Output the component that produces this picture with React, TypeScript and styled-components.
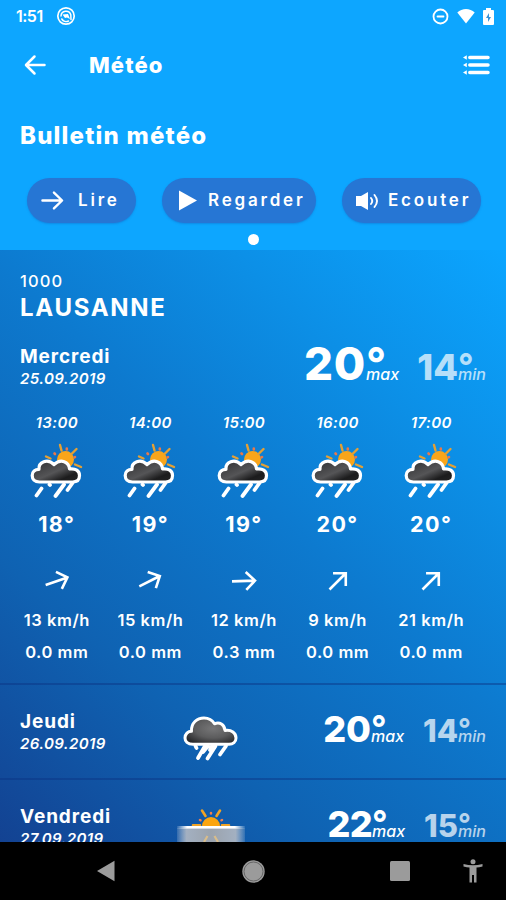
import React from 'react';
import styled, { createGlobalStyle } from 'styled-components';

const GlobalStyle = createGlobalStyle`
  *, *::before, *::after { box-sizing: border-box; }
  html, body { margin: 0; padding: 0; background: #000; }
  body { overflow: hidden; }
`;

const Screen = styled.div`
  width: 506px;
  height: 900px;
  display: flex;
  flex-direction: column;
  overflow: hidden;
  color: #fff;
  background: #0da6ff;
  font-family: Inter, 'Open Sans', sans-serif;
  white-space: nowrap;
  svg { display: block; flex: none; }
`;

const StatusBar = styled.header`
  height: 32px;
  flex: none;
  display: flex;
  align-items: center;
  padding: 0 12px 0 16px;
`;

const Clock = styled.span`
  width: 40px;
  font-size: 16px;
  line-height: 32px;
  font-weight: 600;
  letter-spacing: -0.5px;
`;

const StatusIcons = styled.div`
  margin-left: auto;
  display: flex;
  align-items: center;
  gap: 8px;
`;

const AppBar = styled.div`
  height: 66px;
  flex: none;
  display: flex;
  align-items: center;
  padding: 0 16px 0 24px;
`;

const AppTitle = styled.h1`
  margin: 0 auto 0 43px;
  font-size: 22px;
  line-height: 30px;
  font-weight: 800;
  letter-spacing: 1.1px;
`;

const Bulletin = styled.section`
  height: 152px;
  flex: none;
  display: flex;
  flex-direction: column;
  padding: 22px 25px 0 20px;
`;

const BulletinTitle = styled.h2`
  margin: 0;
  font-size: 24px;
  line-height: 32px;
  font-weight: 800;
  letter-spacing: 1.2px;
`;

const Actions = styled.div`
  margin: 26px 0 0 7px;
  display: flex;
  justify-content: space-between;
`;

const Pill = styled.button<{ $width: number; $left: number; $gap: number }>`
  width: ${(p) => p.$width}px;
  height: 45px;
  border: 0;
  border-radius: 23px;
  padding: 0 0 0 ${(p) => p.$left}px;
  display: flex;
  align-items: center;
  gap: ${(p) => p.$gap}px;
  background: #2676d4;
  box-shadow: 0 1px 2px rgba(20, 90, 180, 0.35);
  color: #fff;
  font: 600 17px/45px Inter, sans-serif;
  letter-spacing: 2.8px;
`;

const PagerDot = styled.span`
  width: 11px;
  height: 11px;
  margin: 11px 0 0 228px;
  border-radius: 50%;
  background: #fff;
`;

const Forecast = styled.main`
  height: 592px;
  flex: none;
  overflow: hidden;
  background: linear-gradient(42deg, #134292 0%, #0f62b2 27%, #0d7acf 55%, #0c8fe6 76%, #0ba5ff 100%);
`;

const Today = styled.section`
  height: 433px;
  padding-top: 19px;
`;

const Place = styled.div`
  padding-left: 20px;
  height: 78px;
`;

const PostCode = styled.div`
  font-size: 16.5px;
  line-height: 24px;
  font-weight: 500;
  letter-spacing: 1.1px;
`;

const City = styled.div`
  font-size: 24px;
  line-height: 30px;
  font-weight: 700;
  letter-spacing: 1.7px;
`;

const DaySummary = styled.div`
  height: 48px;
  display: flex;
  align-items: flex-start;
  padding: 0 19px 0 20px;
`;

const DayLabel = styled.div<{ $raise?: number }>`
  width: 164px;
  margin-top: -${(p) => p.$raise ?? 0}px;
`;

const DayName = styled.div`
  font-size: 19px;
  line-height: 23px;
  font-weight: 700;
  letter-spacing: 0.9px;
`;

const DayDate = styled.div`
  font-size: 15px;
  line-height: 22px;
  font-weight: 600;
  font-style: italic;
  letter-spacing: 0.4px;
`;

const Temps = styled.div<{ $top?: number }>`
  margin-left: auto;
  margin-top: ${(p) => p.$top ?? 0}px;
  display: flex;
  align-items: flex-end;
`;

const Temp = styled.div<{ $faded?: boolean; $width: number }>`
  width: ${(p) => p.$width}px;
  display: flex;
  align-items: flex-end;
  justify-content: flex-end;
  opacity: ${(p) => (p.$faded ? 0.7 : 1)};
`;

const TempValue = styled.span<{ $size: number; $spacing: number }>`
  font-size: ${(p) => p.$size}px;
  line-height: ${(p) => Math.round(p.$size * 0.73)}px;
  font-weight: 800;
  letter-spacing: ${(p) => p.$spacing}px;
`;

const TempUnit = styled.span<{ $height: number; $width: number }>`
  width: ${(p) => p.$width}px;
  height: ${(p) => p.$height}px;
  display: flex;
  flex-direction: column;
  justify-content: space-between;
`;

const Degree = styled.span<{ $size: number }>`
  font-size: ${(p) => p.$size}px;
  height: ${(p) => p.$size * 0.36}px;
  line-height: ${(p) => p.$size * 0.73}px;
  font-weight: 700;
`;

const Bound = styled.span`
  font-size: 16px;
  line-height: 12px;
  font-weight: 500;
  font-style: italic;
`;

const Hours = styled.div`
  display: grid;
  grid-template-columns: repeat(5, 93.6px);
  padding-left: 10px;
`;

const Hour = styled.div`
  display: flex;
  flex-direction: column;
  align-items: center;
`;

const HourTime = styled.div`
  font-size: 15px;
  line-height: 20px;
  font-weight: 600;
  font-style: italic;
  margin: 18px 0 9px;
  letter-spacing: 0.4px;
`;

const HourTemp = styled.div`
  font-size: 21.5px;
  line-height: 28px;
  font-weight: 700;
  margin: 12px 0 31px;
  letter-spacing: 1.4px;
`;

const HourData = styled.div`
  font-size: 16.5px;
  line-height: 32px;
  font-weight: 600;
  letter-spacing: 0.55px;
`;

const WindBox = styled.div`
  height: 24px;
  margin-bottom: 11px;
`;

const DayRow = styled.section`
  height: 95px;
  border-top: 2px solid rgba(10, 50, 130, 0.45);
  display: flex;
  align-items: flex-start;
  padding: 25px 19px 0 20px;
`;

const DayIcon = styled.div<{ $top: number }>`
  width: 70px;
  margin: ${(p) => p.$top}px 0 0 -8px;
  display: flex;
  justify-content: center;
`;

const NavBar = styled.nav`
  height: 58px;
  flex: none;
  background: #000;
  display: flex;
  align-items: center;
  padding-left: 96px;
`;

const NavItem = styled.div<{ $gap: number }>`
  margin-right: ${(p) => p.$gap}px;
`;

const stroke = { fill: 'none', stroke: '#fff', strokeLinecap: 'round', strokeLinejoin: 'round' } as const;

const ArrowIcon = () => (
  <svg width="23" height="23" viewBox="0 0 24 24">
    <path d="M1.500 12H21.500M13.500 3.800L22 12l-8.500 8.200" {...stroke} strokeWidth="2.500" />
  </svg>
);

const WindIcon = ({ angle }: { angle: number }) => (
  <svg width="26" height="24" viewBox="0 0 26 24">
    <g transform={`rotate(${angle} 13 12)`} fill="none" stroke="#fff" strokeWidth="2.600">
      <path d="M1 12H24M15 3L24 12l-9 9" />
    </g>
  </svg>
);

const ShowerIcon = () => (
  <svg width="54" height="56" viewBox="0 0 54 56">
    <defs>
      <linearGradient id="darkCloud" x1="0" y1="0" x2="1" y2="1">
        <stop offset="0" stopColor="#2d2d2f" />
        <stop offset="0.5" stopColor="#555557" />
        <stop offset="0.75" stopColor="#1c1c1d" />
        <stop offset="1" stopColor="#242425" />
      </linearGradient>
    </defs>
    <circle cx="35.500" cy="17.500" r="8.500" fill="#f9a51a" />
    <g stroke="#e3a035" strokeWidth="2.400" strokeLinecap="round">
      <path d="M30 3L31.500 8.500M46.500 7L41.500 12M45 22.500L51 25M16 14.500L20.500 16.500" />
    </g>
    <g stroke="#e8784a" strokeWidth="2.600" strokeLinecap="round">
      <path d="M36.800 6.500v1M45 15l-.5.300M24.500 11.500l.5.500" />
    </g>
    <g stroke="#fff" strokeWidth="3.800" strokeLinecap="round">
      <path d="M11.500 46.500l-5 7M19.500 42.500l.5.500M34 42.500L25.500 54M42.500 41L37.500 48" />
    </g>
    <path
      d="M9.500 40C4.500 40 2.200 37 2.200 33.500C2.200 29.500 5 27.300 9 27.300C8.300 20 17.500 16 24 22.500C31 16 39 20 39.500 27C45.500 26 49.500 29 49.500 33.500C49.500 37.500 47 40 42.500 40Z"
      fill="url(#darkCloud)" stroke="#fff" strokeWidth="3.200" strokeLinejoin="round"
    />
  </svg>
);

const RainIcon = () => (
  <svg width="56" height="48" viewBox="0 0 56 48">
    <defs>
      <radialGradient id="rainCloud" cx="0.55" cy="0.4" r="0.65">
        <stop offset="0" stopColor="#767677" />
        <stop offset="0.55" stopColor="#5c5c5d" />
        <stop offset="1" stopColor="#29292b" />
      </radialGradient>
    </defs>
    <g stroke="#fff" strokeWidth="3.800" strokeLinecap="round">
      <path d="M12.500 30l1 2M22 30L15 42M25 30l-5 6M32.500 30L24.500 42.500M43 30L37 38.500M29 30l-2 4" />
    </g>
    <path
      d="M10 28.300C4.500 28.300 2 25.500 2 22C2 18 5 15.300 8.500 15.300C8 7 14 2 21 2C26.500 2 29.500 4.500 31.500 7.800C36.500 5.500 41.500 8.500 42 14.500C48.500 13.500 53 17 53 22C53 26 50 28.300 46 28.300Z"
      fill="url(#rainCloud)" stroke="#fff" strokeWidth="3" strokeLinejoin="round"
    />
  </svg>
);

const FogSunIcon = () => (
  <svg width="70" height="40" viewBox="0 0 70 40">
    <defs>
      <linearGradient id="fog" x1="0" y1="0" x2="1" y2="0">
        <stop offset="0" stopColor="#b8c4d4" stopOpacity="0.2" />
        <stop offset="0.14" stopColor="#a3b0c1" />
        <stop offset="0.5" stopColor="#9ba3ad" />
        <stop offset="0.86" stopColor="#a3b0c1" />
        <stop offset="1" stopColor="#b8c4d4" stopOpacity="0.2" />
      </linearGradient>
      <linearGradient id="fogEdge" x1="0" y1="0" x2="1" y2="0">
        <stop offset="0" stopColor="#fff" stopOpacity="0.1" />
        <stop offset="0.15" stopColor="#fff" />
        <stop offset="0.85" stopColor="#fff" />
        <stop offset="1" stopColor="#fff" stopOpacity="0.1" />
      </linearGradient>
    </defs>
    <path d="M26 18a9 9 0 0 1 18 0Z" fill="#fba50f" />
    <g stroke="#f0a325" strokeWidth="2.600" strokeLinecap="round">
      <path d="M29.500 8L26 2.500M40.500 8L44 2.500M17 17.300H24M46 17.300H53" />
    </g>
    <g stroke="#ef8050" strokeWidth="2.500" strokeLinecap="round">
      <path d="M35 5V5.500M24 12l.5.300M46 12l-.5.300" />
    </g>
    <rect x="1" y="20" width="68" height="20" fill="url(#fog)" />
    <rect x="1" y="18" width="68" height="2.600" fill="url(#fogEdge)" />
    <path d="M31.500 28L28 34M38.500 28l3.500 6" stroke="#d9bd8b" strokeWidth="2.200" />
  </svg>
);

type TempProps = { value: string; size: number; faded?: boolean; width: number; spacing?: number; unitWidth: number; degree: number };

const Temperature = ({ value, size, faded, width, spacing = 0, unitWidth, degree }: TempProps) => (
  <Temp $faded={faded} $width={width}>
    <TempValue $size={size} $spacing={spacing}>{value}</TempValue>
    <TempUnit $height={Math.round(size * 0.73)} $width={unitWidth}>
      <Degree $size={degree}>°</Degree>
      <Bound>{faded ? 'min' : 'max'}</Bound>
    </TempUnit>
  </Temp>
);

const hours = [
  { time: '13:00', temp: '18°', angle: -19, wind: '13 km/h', rain: '0.0 mm' },
  { time: '14:00', temp: '19°', angle: -27, wind: '15 km/h', rain: '0.0 mm' },
  { time: '15:00', temp: '19°', angle: -2, wind: '12 km/h', rain: '0.3 mm' },
  { time: '16:00', temp: '20°', angle: -45, wind: '9 km/h', rain: '0.0 mm' },
  { time: '17:00', temp: '20°', angle: -45, wind: '21 km/h', rain: '0.0 mm' },
];

export default function App() {
  return (
    <>
      <GlobalStyle />
      <Screen>
        <StatusBar>
          <Clock>1:51</Clock>
          <svg width="20" height="20" viewBox="0 0 20 20">
            <circle cx="10" cy="10" r="8.200" {...stroke} strokeWidth="1.700" />
            <path d="M5 10A5 5 0 0 1 14.800 8.800L15 13.500M5.800 13A5.200 5.200 0 0 0 12.500 15" {...stroke} strokeWidth="1.500" />
            <path d="M6.500 8.500l5.500-.5 2 5-3-1.500-2 .5z" fill="#fff" />
          </svg>
          <StatusIcons>
            <svg width="17" height="17" viewBox="0 0 17 17">
              <circle cx="8.500" cy="8.500" r="7" {...stroke} strokeWidth="1.800" />
              <path d="M5.500 8.500h6" {...stroke} strokeWidth="1.800" />
            </svg>
            <svg width="18" height="16" viewBox="0 0 18 16">
              <path d="M9 15.500L.3 4.500C5-.2 13-.2 17.700 4.500z" fill="#fff" />
            </svg>
            <svg width="11" height="17" viewBox="0 0 11 17">
              <path d="M3 0h5v2h2q1 0 1 1v13q0 1-1 1H1q-1 0-1-1V3q0-1 1-1h2z" fill="#fff" />
              <path d="M6 5L3 10h2v4l3-5H6z" fill="#3a93d8" />
            </svg>
          </StatusIcons>
        </StatusBar>
        <AppBar>
          <svg width="22" height="22" viewBox="0 0 22 22">
            <path d="M20.500 11H2.500M10.500 2.500L2 11l8.500 8.500" {...stroke} strokeWidth="2.500" />
          </svg>
          <AppTitle>Météo</AppTitle>
          <svg width="27" height="20" viewBox="0 0 27 20">
            <path d="M6.800 2.500H25M6.800 10H25M6.800 17.500H25" {...stroke} strokeWidth="3.500" />
            <path d="M0 2.500l3.800-2.300v4.600zM0 10l3.800-2.300v4.600zM0 17.500l3.800-2.300v4.600z" fill="#fff" />
          </svg>
        </AppBar>
        <Bulletin>
          <BulletinTitle>Bulletin météo</BulletinTitle>
          <Actions>
            <Pill $width={109} $left={14} $gap={14}>
              <ArrowIcon />Lire
            </Pill>
            <Pill $width={154} $left={17} $gap={11}>
              <svg width="18" height="21" viewBox="0 0 18 21"><path d="M0 .5L18 10.500L0 20.500z" fill="#fff" /></svg>
              Regarder
            </Pill>
            <Pill $width={139} $left={14} $gap={9}>
              <svg width="23" height="18" viewBox="0 0 23 18">
                <path d="M0 4h5l7-4v18l-7-4H0z" fill="#fff" />
                <path d="M15 6q2.500 3 0 6M18.500 3q5 6 0 12" {...stroke} strokeWidth="1.900" />
              </svg>
              Ecouter
            </Pill>
          </Actions>
          <PagerDot />
        </Bulletin>
        <Forecast>
          <Today>
            <Place>
              <PostCode>1000</PostCode>
              <City>LAUSANNE</City>
            </Place>
            <DaySummary>
              <DayLabel $raise={2}>
                <DayName>Mercredi</DayName>
                <DayDate>25.09.2019</DayDate>
              </DayLabel>
              <Temps>
                <Temperature value="20" size={45.500} width={110} spacing={0.8} unitWidth={33} degree={44} />
                <Temperature value="14" size={36} width={88} unitWidth={29} degree={34} faded />
              </Temps>
            </DaySummary>
            <Hours>
              {hours.map((h) => (
                <Hour key={h.time}>
                  <HourTime>{h.time}</HourTime>
                  <ShowerIcon />
                  <HourTemp>{h.temp}</HourTemp>
                  <WindBox><WindIcon angle={h.angle} /></WindBox>
                  <HourData>{h.wind}</HourData>
                  <HourData>{h.rain}</HourData>
                </Hour>
              ))}
            </Hours>
          </Today>
          <DayRow>
            <DayLabel>
              <DayName>Jeudi</DayName>
              <DayDate>26.09.2019</DayDate>
            </DayLabel>
            <DayIcon $top={6}><RainIcon /></DayIcon>
            <Temps $top={6}>
              <Temperature value="20" size={36} width={90} unitWidth={33} degree={34} />
              <Temperature value="14" size={31} width={83} unitWidth={29} degree={28} faded />
            </Temps>
          </DayRow>
          <DayRow>
            <DayLabel>
              <DayName>Vendredi</DayName>
              <DayDate>27.09.2019</DayDate>
            </DayLabel>
            <DayIcon $top={3}><FogSunIcon /></DayIcon>
            <Temps $top={6}>
              <Temperature value="22" size={36} width={90} spacing={-0.7} unitWidth={33} degree={34} />
              <Temperature value="15" size={31} width={82} unitWidth={29} degree={28} faded />
            </Temps>
          </DayRow>
        </Forecast>
        <NavBar>
          <NavItem $gap={126}>
            <svg width="19" height="22" viewBox="0 0 19 22"><path d="M1 11L18.500 .8v20.400z" fill="#9b9b9b" /></svg>
          </NavItem>
          <NavItem $gap={124}>
            <svg width="25" height="25" viewBox="0 0 25 25">
              <circle cx="12.500" cy="12.500" r="11.200" fill="#9b9b9b" />
              <circle cx="12.500" cy="12.500" r="9.500" fill="none" stroke="#666" strokeWidth="1" />
            </svg>
          </NavItem>
          <NavItem $gap={53}>
            <svg width="20" height="20" viewBox="0 0 20 20"><rect width="20" height="20" rx="1.500" fill="#9b9b9b" /></svg>
          </NavItem>
          <NavItem $gap={0}>
            <svg width="20" height="24" viewBox="0 0 20 24">
              <circle cx="10" cy="2.800" r="2.500" fill="#9b9b9b" />
              <path d="M.5 5Q10 7.600 19.500 5v2.500Q16 8.400 13.500 8.600V23.500H11V16H9v7.500H6.500V8.600Q4 8.400 .5 7.500z" fill="#9b9b9b" />
            </svg>
          </NavItem>
        </NavBar>
      </Screen>
    </>
  );
}
